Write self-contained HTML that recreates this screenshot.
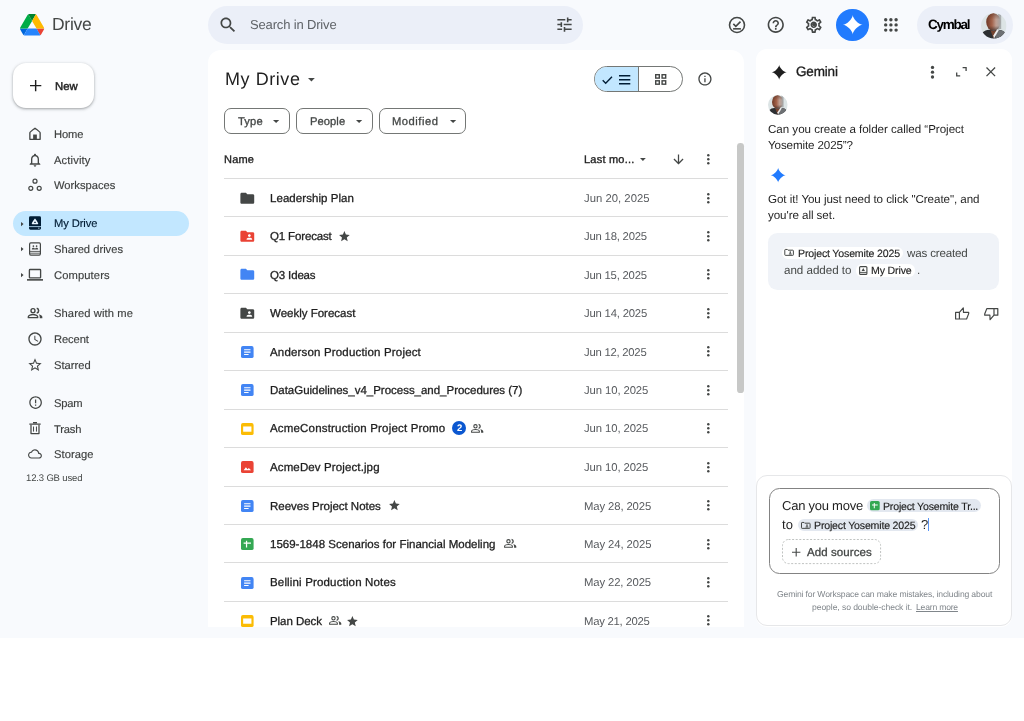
<!DOCTYPE html>
<html lang="en">
<head>
<meta charset="utf-8">
<title>My Drive - Google Drive</title>
<style>
*{box-sizing:border-box;margin:0;padding:0}
html,body{width:1024px;height:721px;overflow:hidden;background:#fff}
body{font-family:"Liberation Sans",sans-serif;color:#1f1f1f;position:relative;font-size:11px;text-rendering:geometricPrecision}
#app{position:absolute;left:0;top:0;width:1024px;height:638px;background:#f8fafd;overflow:hidden}
.abs{position:absolute}
.t{position:absolute;white-space:nowrap;will-change:transform}
svg{position:absolute;overflow:visible}
</style>
</head>
<body>
<div id="app">
<!-- sidebar -->
<div id="sidebar">
<svg style="left:20px;top:13.7px" width="24.2" height="21.5" viewBox="0 0 87.3 78"><path d="m6.6 66.85 3.85 6.65c.8 1.4 1.95 2.5 3.3 3.3l13.75-23.8h-27.5c0 1.55.4 3.1 1.2 4.5z" fill="#0066da"/><path d="m43.65 25-13.75-23.8c-1.35.8-2.5 1.9-3.3 3.3l-25.4 44a9.06 9.06 0 0 0 -1.2 4.5h27.5z" fill="#00ac47"/><path d="m73.55 76.800c1.350-.8 2.500-1.900 3.300-3.300l1.600-2.750 7.650-13.250c.8-1.400 1.200-2.950 1.200-4.500h-27.502l5.852 11.500z" fill="#ea4335"/><path d="m43.650 25 13.750-23.800c-1.350-.8-2.900-1.200-4.500-1.200h-18.500c-1.600 0-3.150.45-4.500 1.200z" fill="#00832d"/><path d="m59.800 53h-32.300l-13.750 23.800c1.350.8 2.900 1.200 4.500 1.200h50.800c1.600 0 3.150-.45 4.500-1.200z" fill="#2684fc"/><path d="m73.400 26.500-12.700-22c-.8-1.400-1.950-2.500-3.300-3.300l-13.750 23.800 16.150 28h27.450c0-1.550-.4-3.100-1.200-4.500z" fill="#ffba00"/></svg>
<div class="t" style="left:51.5px;top:13.1px;font-size:17.5px;line-height:22px;color:#444746;letter-spacing:-0.27px;">Drive</div>
<div class="abs" style="left:12.5px;top:63px;width:81.5px;height:45px;border-radius:13px;background:#fff;box-shadow:0 1px 2px rgba(60,64,67,.3),0 1px 3px 1px rgba(60,64,67,.15)"></div>
<svg style="left:29.6px;top:80.2px" width="11.3" height="11.3" viewBox="0 0 12 12"><path d="M6 0v12M0 6h12" stroke="#1f1f1f" stroke-width="1.500" fill="none"/></svg>
<div class="t" style="left:54.8px;top:78.8px;font-size:11.3px;line-height:16px;color:#1f1f1f;letter-spacing:0.06px;-webkit-text-stroke:0.45px #1f1f1f;">New</div>
<div class="abs" style="left:12.9px;top:211px;width:176.1px;height:25.2px;border-radius:12.6px;background:#c2e7ff"></div>
<div class="t" style="left:54.3px;top:126.7px;font-size:11.2px;line-height:16px;color:#3f4140;letter-spacing:-0.14px;-webkit-text-stroke:0.15px #3f4140;">Home</div>
<div class="t" style="left:54.3px;top:152.7px;font-size:11.2px;line-height:16px;color:#3f4140;letter-spacing:0.13px;-webkit-text-stroke:0.15px #3f4140;">Activity</div>
<div class="t" style="left:54.3px;top:178px;font-size:11.2px;line-height:16px;color:#3f4140;letter-spacing:0.01px;-webkit-text-stroke:0.15px #3f4140;">Workspaces</div>
<div class="t" style="left:54.3px;top:216.3px;font-size:11.2px;line-height:16px;color:#001d35;letter-spacing:-0.11px;-webkit-text-stroke:0.15px #001d35;">My Drive</div>
<div class="t" style="left:54.3px;top:242px;font-size:11.2px;line-height:16px;color:#3f4140;letter-spacing:0px;-webkit-text-stroke:0.15px #3f4140;">Shared drives</div>
<div class="t" style="left:54.3px;top:267.7px;font-size:11.2px;line-height:16px;color:#3f4140;letter-spacing:0.11px;-webkit-text-stroke:0.15px #3f4140;">Computers</div>
<div class="t" style="left:54.3px;top:306.1px;font-size:11.2px;line-height:16px;color:#3f4140;letter-spacing:0.09px;-webkit-text-stroke:0.15px #3f4140;">Shared with me</div>
<div class="t" style="left:54.3px;top:331.8px;font-size:11.2px;line-height:16px;color:#3f4140;letter-spacing:-0.11px;-webkit-text-stroke:0.15px #3f4140;">Recent</div>
<div class="t" style="left:54.3px;top:357.7px;font-size:11.2px;line-height:16px;color:#3f4140;letter-spacing:0px;-webkit-text-stroke:0.15px #3f4140;">Starred</div>
<div class="t" style="left:54.3px;top:395.9px;font-size:11.2px;line-height:16px;color:#3f4140;letter-spacing:-0.23px;-webkit-text-stroke:0.15px #3f4140;">Spam</div>
<div class="t" style="left:54.3px;top:421.7px;font-size:11.2px;line-height:16px;color:#3f4140;letter-spacing:-0.18px;-webkit-text-stroke:0.15px #3f4140;">Trash</div>
<div class="t" style="left:54.3px;top:447.1px;font-size:11.2px;line-height:16px;color:#3f4140;letter-spacing:0.04px;-webkit-text-stroke:0.15px #3f4140;">Storage</div>
<div class="t" style="left:25.9px;top:470.8px;font-size:9.5px;line-height:16px;color:#444746;letter-spacing:-0.15px;">12.3 GB used</div>
<svg style="left:20.7px;top:221.5px" width="2.6" height="4.2" viewBox="0 0 2.6 4.2"><path d="M0 0L2.600 2.100L0 4.200z" fill="#444746"/></svg>
<svg style="left:20.7px;top:247.2px" width="2.6" height="4.2" viewBox="0 0 2.6 4.2"><path d="M0 0L2.600 2.100L0 4.200z" fill="#444746"/></svg>
<svg style="left:20.7px;top:272.9px" width="2.6" height="4.2" viewBox="0 0 2.6 4.2"><path d="M0 0L2.600 2.100L0 4.200z" fill="#444746"/></svg>
<svg style="left:27.2px;top:125.9px" width="16" height="16" viewBox="0 0 24 24"><path d="M12 3.400C12 3.400 4.300 8.800 4.300 10V20H19.700V10C19.700 8.800 12 3.400 12 3.400Z" fill="none" stroke="#444746" stroke-width="2" stroke-linejoin="round"/><rect x="9.200" y="12.800" width="5.600" height="7" fill="#444746"/></svg>
<svg style="left:27.2px;top:151.6px" width="16" height="16" viewBox="0 0 24 24"><path fill="#444746" d="M12 22c1.1 0 2-.9 2-2h-4c0 1.1.9 2 2 2zm6-6v-5c0-3.070-1.630-5.640-4.500-6.320V4c0-.830-.670-1.500-1.500-1.500s-1.500.670-1.500 1.500v.680C7.640 5.360 6 7.920 6 11v5l-2 2v1h16v-1l-2-2zm-2 1H8v-6c0-2.480 1.510-4.500 4-4.500s4 2.020 4 4.500v6z"/></svg>
<svg style="left:27.2px;top:177.2px" width="16" height="16" viewBox="0 0 24 24"><g fill="none" stroke="#444746" stroke-width="1.800"><circle cx="12" cy="6.300" r="3"/><circle cx="5.700" cy="17" r="3"/><circle cx="18.300" cy="17" r="3"/></g></svg>
<svg style="left:27.2px;top:215.3px" width="16" height="16" viewBox="0 0 24 24"><path d="M5.200 1.900h13.600a2.200 2.200 0 0 1 2.200 2.200v15.800a2.200 2.200 0 0 1-2.200 2.200H5.200a2.200 2.200 0 0 1-2.200-2.200V4.100a2.200 2.200 0 0 1 2.200-2.200z" fill="#001d35"/><path d="M3 17.400h18" stroke="#c2e7ff" stroke-width="1.200"/><circle cx="17.800" cy="19.800" r=".9" fill="#c2e7ff"/><path d="M12 5.200c.6 0 4.900 6.600 4.900 7.600c0 .6-.5 1-1 1H8.100c-.5 0-1-.4-1-1C7.100 11.800 11.400 5.200 12 5.200z" fill="#e6f4ff"/><path d="M12 9.300l1.500 2.700h-3z" fill="#001d35"/></svg>
<svg style="left:27.2px;top:241.2px" width="16" height="16" viewBox="0 0 24 24"><rect x="3.900" y="2.900" width="16.200" height="18.200" rx="1.800" fill="none" stroke="#444746" stroke-width="1.800"/><path d="M4 15.600h16M4 18.300h16" stroke="#444746" stroke-width="1.300"/><circle cx="9.600" cy="7.800" r="1.250" fill="#444746"/><circle cx="14.400" cy="7.800" r="1.250" fill="#444746"/><path d="M7.200 12.600c0-1.700 1.200-2.400 2.400-2.400s2.400.7 2.400 2.400zM12 12.600c0-1.700 1.200-2.400 2.400-2.400s2.400.7 2.400 2.400z" fill="#444746"/></svg>
<svg style="left:27.2px;top:266.6px" width="16" height="16" viewBox="0 0 24 24"><rect x="3.600" y="3.800" width="16.800" height="12.400" rx="1" fill="none" stroke="#444746" stroke-width="2"/><path d="M0 19.300h24" stroke="#444746" stroke-width="2.400"/></svg>
<svg style="left:27.2px;top:304.9px" width="16" height="16" viewBox="0 0 24 24"><g fill="none" stroke="#444746" stroke-width="2.100"><circle cx="9" cy="8.500" r="3"/><path d="M2 19v-1.200c0-2.300 4.600-3.500 7-3.500s7 1.200 7 3.500V19z" stroke-linejoin="round"/></g><path d="M14.600 4.900a3.700 3.700 0 0 1 0 7.200" fill="none" stroke="#444746" stroke-width="2.300"/><path d="M17.600 13.800c2.600.6 5.400 1.800 5.400 4V20h-3.900v-2.200c0-1.600-.6-2.900-1.500-4z" fill="#444746"/></svg>
<svg style="left:27.2px;top:330.9px" width="16" height="16" viewBox="0 0 24 24"><path fill="#444746" d="M11.99 2C6.47 2 2 6.48 2 12s4.47 10 9.99 10C17.52 22 22 17.52 22 12S17.52 2 11.99 2zM12 20c-4.42 0-8-3.58-8-8s3.58-8 8-8 8 3.58 8 8-3.58 8-8 8zm.5-13H11v6l5.25 3.15.75-1.23-4.5-2.67z"/></svg>
<svg style="left:27.2px;top:356.7px" width="16" height="16" viewBox="0 0 24 24"><path fill="#444746" d="M22 9.24l-7.19-.62L12 2 9.19 8.63 2 9.24l5.46 4.73L5.82 21 12 17.27 18.18 21l-1.63-7.03L22 9.24zM12 15.4l-3.76 2.27 1-4.28-3.32-2.88 4.38-.38L12 6.1l1.71 4.04 4.38.38-3.32 2.88 1 4.28L12 15.4z"/></svg>
<svg style="left:27.6px;top:395.4px" width="15.2" height="15.2" viewBox="0 0 24 24"><path fill="#444746" d="M11 15h2v2h-2zm0-8h2v6h-2zm.99-5C6.47 2 2 6.48 2 12s4.47 10 9.99 10C17.52 22 22 17.520 22 12S17.520 2 11.990 2zM12 20c-4.420 0-8-3.580-8-8s3.580-8 8-8 8 3.580 8 8-3.580 8-8 8z"/></svg>
<svg style="left:27.2px;top:420.4px" width="16" height="16" viewBox="0 0 24 24"><path d="M6 7.200V20.300H18V7.200" fill="none" stroke="#444746" stroke-width="1.900" stroke-linejoin="round"/><path d="M3.500 6.200h17M9 3.800h6" stroke="#444746" stroke-width="1.900"/><path d="M9.800 9.800v7.600M14.200 9.800v7.600" stroke="#444746" stroke-width="1.500"/></svg>
<svg style="left:28.35px;top:447.3px" width="13.9" height="13.9" viewBox="0 0 24 24"><path fill="#444746" d="M12 6c2.62 0 4.88 1.86 5.39 4.43l.3 1.5 1.53.11c1.560.1 2.780 1.410 2.780 2.960 0 1.650-1.350 3-3 3H6c-2.210 0-4-1.790-4-4 0-2.050 1.530-3.760 3.560-3.970l1.070-.11.5-.95C8.080 7.140 9.940 6 12 6m0-2C9.110 4 6.600 5.640 5.350 8.040 2.340 8.360 0 10.910 0 14c0 3.310 2.690 6 6 6h13c2.760 0 5-2.240 5-5 0-2.640-2.050-4.780-4.650-4.960C18.670 6.590 15.640 4 12 4z"/></svg>
</div>
<!-- topbar -->
<div id="topbar">
<div class="abs" style="left:208.2px;top:5.5px;width:375px;height:38.6px;border-radius:19.300px;background:#ebeff8"></div>
<svg style="left:218px;top:14.6px" width="20" height="20" viewBox="0 0 24 24"><path fill="#444746" d="M15.5 14h-.79l-.28-.27C15.41 12.59 16 11.11 16 9.5 16 5.91 13.09 3 9.5 3S3 5.91 3 9.5 5.91 16 9.5 16c1.61 0 3.09-.59 4.23-1.57l.27.28v.79l5 4.99L20.49 19l-4.99-5zm-6 0C7.01 14 5 11.99 5 9.5S7.01 5 9.5 5 14 7.01 14 9.5 11.99 14 9.5 14z"/></svg>
<div class="t" style="left:250.4px;top:15.8px;font-size:13px;line-height:18px;color:#5f6368;letter-spacing:-0.16px;">Search in Drive</div>
<svg style="left:554.6px;top:15.2px" width="19" height="19" viewBox="0 0 24 24"><path fill="#444746" d="M3 17v2h6v-2H3zM3 5v2h10V5H3zm10 16v-2h8v-2h-8v-2h-2v6h2zM7 9v2H3v2h4v2h2V9H7zm14 4v-2H11v2h10zm-6-4h2V7h4V5h-4V3h-2v6z"/></svg>
<svg style="left:727px;top:14.6px" width="20" height="20" viewBox="0 0 24 24"><circle cx="12" cy="12" r="9" fill="none" stroke="#444746" stroke-width="1.900"/><path d="M7.600 10.600l3 3 5.600-5.600" fill="none" stroke="#444746" stroke-width="1.900"/><path d="M7.300 16.600h9.400" stroke="#444746" stroke-width="1.900"/></svg>
<svg style="left:766.05px;top:14.95px" width="19.5" height="19.5" viewBox="0 0 24 24"><path fill="#444746" d="M11 18h2v-2h-2v2zm1-16C6.48 2 2 6.48 2 12s4.48 10 10 10 10-4.48 10-10S17.52 2 12 2zm0 18c-4.41 0-8-3.59-8-8s3.59-8 8-8 8 3.59 8 8-3.59 8-8 8zm0-14c-2.21 0-4 1.79-4 4h2c0-1.1.9-2 2-2s2 .9 2 2c0 2-3 1.75-3 5h2c0-2.25 3-2.5 3-5 0-2.21-1.79-4-4-4z"/></svg>
<svg style="left:804.25px;top:14.95px" width="19.5" height="19.5" viewBox="0 0 24 24"><path fill="#444746" d="M19.43 12.98c.04-.32.07-.64.07-.98 0-.34-.03-.66-.07-.98l2.11-1.65c.19-.15.24-.42.12-.64l-2-3.46c-.09-.16-.26-.25-.44-.25-.06 0-.12.01-.17.03l-2.49 1c-.52-.4-1.08-.73-1.69-.98l-.38-2.65C14.46 2.18 14.25 2 14 2h-4c-.25 0-.46.18-.49.42l-.38 2.65c-.61.25-1.17.59-1.69.98l-2.49-1c-.06-.02-.12-.03-.18-.03-.17 0-.34.09-.43.25l-2 3.46c-.13.22-.07.49.12.64l2.11 1.65c-.04.32-.07.65-.07.98 0 .33.03.66.07.98l-2.11 1.65c-.19.15-.24.42-.12.64l2 3.46c.09.16.26.25.44.25.06 0 .12-.01.17-.03l2.49-1c.52.4 1.08.73 1.69.98l.38 2.65c.03.24.24.42.49.42h4c.25 0 .46-.18.49-.42l.38-2.65c.61-.25 1.17-.59 1.69-.98l2.49 1c.06.02.12.03.18.03.17 0 .34-.09.43-.25l2-3.46c.12-.22.07-.49-.12-.64l-2.11-1.65zm-1.98-1.71c.04.31.05.52.05.73 0 .21-.02.43-.05.73l-.14 1.13.89.7 1.08.84-.7 1.21-1.27-.51-1.04-.42-.9.68c-.43.32-.84.56-1.25.73l-1.06.43-.16 1.13-.2 1.35h-1.4l-.19-1.35-.16-1.13-1.06-.43c-.43-.18-.83-.41-1.23-.71l-.91-.7-1.06.43-1.27.51-.7-1.21 1.08-.84.89-.7-.14-1.13c-.03-.31-.05-.54-.05-.74s.02-.43.05-.73l.14-1.13-.89-.7-1.08-.84.7-1.21 1.27.51 1.04.42.9-.68c.43-.32.84-.56 1.25-.73l1.06-.43.16-1.13.2-1.35h1.39l.19 1.35.16 1.13 1.06.43c.43.18.83.41 1.23.71l.91.7 1.06-.43 1.27-.51.7 1.21-1.07.85-.89.7.14 1.13zM12 8c-2.21 0-4 1.79-4 4s1.790 4 4 4 4-1.790 4-4-1.790-4-4-4zm0 6c-1.100 0-2-.9-2-2s.9-2 2-2 2 .9 2 2-.9 2-2 2z"/></svg>
<div class="abs" style="left:812.2px;top:22.9px;width:3.6px;height:3.6px;border-radius:50%;background:#444746"></div>
<div class="abs" style="left:836.3px;top:8.5px;width:32.5px;height:32.5px;border-radius:50%;background:#217bfe"></div>
<svg style="left:841.8px;top:14px" width="21.5" height="21.5" viewBox="0 0 24 24"><path fill="#fff" d="M12 1C12 5.100 18.900 12 23 12C18.900 12 12 18.900 12 23C12 18.900 5.100 12 1 12C5.100 12 12 5.100 12 1Z"/></svg>
<svg style="left:884.1px;top:17.8px" width="13.8" height="13.8" viewBox="0 0 13.8 13.8"><g fill="#444746"><circle cx="1.7" cy="1.7" r="1.700"/><circle cx="1.7" cy="6.9" r="1.700"/><circle cx="1.7" cy="12.1" r="1.700"/><circle cx="6.9" cy="1.7" r="1.700"/><circle cx="6.9" cy="6.9" r="1.700"/><circle cx="6.9" cy="12.1" r="1.700"/><circle cx="12.1" cy="1.7" r="1.700"/><circle cx="12.1" cy="6.9" r="1.700"/><circle cx="12.1" cy="12.1" r="1.700"/></g></svg>
<div class="abs" style="left:916.6px;top:5.6px;width:96.4px;height:38.6px;border-radius:19.300px;background:#ebeff8"></div>
<div class="t" style="left:928.2px;top:16.1px;font-size:13.5px;line-height:18px;color:#000;font-weight:bold;letter-spacing:-1.26px;">Cymbal</div>
<svg style="left:980.7px;top:12.5px" width="25.5" height="25.5" viewBox="0 0 25.500 25.500"><defs><clipPath id="ca"><circle cx="12.750" cy="12.750" r="12.750"/></clipPath><linearGradient id="ha" x1="0" x2="1"><stop offset="0" stop-color="#6e3926"/><stop offset=".4" stop-color="#a2624a"/><stop offset=".68" stop-color="#bf9f92"/><stop offset="1" stop-color="#a4a3a2"/></linearGradient><linearGradient id="sa" x1="0" x2="0" y1="0" y2="1"><stop offset="0" stop-color="#5a2f20" stop-opacity=".55"/><stop offset=".35" stop-color="#5a2f20" stop-opacity="0"/><stop offset=".72" stop-color="#3b2c28" stop-opacity="0"/><stop offset="1" stop-color="#3b2c28" stop-opacity=".75"/></linearGradient></defs><g clip-path="url(#ca)"><rect width="25.500" height="25.500" fill="#dce4e5"/><rect x="17.200" y="0" width="3" height="16" fill="#a9adae"/><ellipse cx="12.400" cy="9" rx="7.200" ry="8.800" fill="url(#ha)"/><ellipse cx="12.400" cy="9" rx="7.200" ry="8.800" fill="url(#sa)"/><path d="M1 20C5 16.500 8 16 12.500 17.800C17 16 21 16.500 24.500 20V26H1z" fill="#2d2f32"/><path d="M16 17.200C19 16.400 22 17.500 24.500 20V26H14z" fill="#6d7073"/><path d="M9.300 16.800L12.500 25.500L15.700 16.800C13.500 18.600 11.500 18.600 9.300 16.800z" fill="#74432f"/><path d="M13 25.500L17.800 17L16 16.400L12.300 22.500z" fill="#ececec"/></g></svg>
</div>
<!-- main -->
<div id="main">
<div class="abs" style="left:208.4px;top:50.2px;width:535.2px;height:576.8px;border-radius:13px 13px 0 0;background:#fff"></div>
<div class="t" style="left:224.6px;top:67px;font-size:18px;line-height:24px;color:#1f1f1f;letter-spacing:0.56px;">My Drive</div>
<svg style="left:308.4px;top:77.5px" width="6.8" height="3.4" viewBox="0 0 6.800 3.400"><path d="M0 0h6.800L3.400 3.400z" fill="#444746"/></svg>
<div class="abs" style="left:224.2px;top:108.4px;width:65.6px;height:25.4px;border:1px solid #747775;border-radius:7px;background:#fff"></div>
<div class="t" style="left:237.7px;top:113.8px;font-size:11.2px;line-height:16px;color:#444746;letter-spacing:0.13px;-webkit-text-stroke:0.3px #444746;">Type</div>
<svg style="left:273.3px;top:119.7px" width="6.2" height="3.1" viewBox="0 0 6.200 3.100"><path d="M0 0h6.200L3.100 3.100z" fill="#444746"/></svg>
<div class="abs" style="left:296.1px;top:108.4px;width:76.8px;height:25.4px;border:1px solid #747775;border-radius:7px;background:#fff"></div>
<div class="t" style="left:309.8px;top:113.8px;font-size:11.2px;line-height:16px;color:#444746;letter-spacing:0.06px;-webkit-text-stroke:0.3px #444746;">People</div>
<svg style="left:356px;top:119.7px" width="6.2" height="3.1" viewBox="0 0 6.200 3.100"><path d="M0 0h6.200L3.100 3.100z" fill="#444746"/></svg>
<div class="abs" style="left:379.3px;top:108.4px;width:87.2px;height:25.4px;border:1px solid #747775;border-radius:7px;background:#fff"></div>
<div class="t" style="left:392.3px;top:113.8px;font-size:11.2px;line-height:16px;color:#444746;letter-spacing:0.51px;-webkit-text-stroke:0.3px #444746;">Modified</div>
<svg style="left:449.9px;top:119.7px" width="6.2" height="3.1" viewBox="0 0 6.200 3.100"><path d="M0 0h6.200L3.100 3.100z" fill="#444746"/></svg>
<div class="abs" style="left:593.500px;top:66.200px;width:89.300px;height:25.400px;border:1px solid #747775;border-radius:12.700px;background:#fff;overflow:hidden"><div class="abs" style="left:0;top:0;width:44.300px;height:24px;background:#c2e7ff;border-right:1px solid #747775"></div></div>
<svg style="left:602.1px;top:75.5px" width="10.7" height="7.8" viewBox="0 0 10.700 7.800"><path d="M0.700 4.200l3 3L10 0.800" fill="none" stroke="#001d35" stroke-width="1.400"/></svg>
<svg style="left:619.2px;top:74.5px" width="11.3" height="9.6" viewBox="0 0 11.300 9.600"><path d="M0 .8h11.300M0 4.800h11.300M0 8.800h11.300" stroke="#001d35" stroke-width="1.400"/></svg>
<svg style="left:654.7px;top:73.9px" width="11.4" height="10.9" viewBox="0 0 11.400 10.900"><g fill="none" stroke="#444746" stroke-width="1.400"><rect x=".7" y=".7" width="3.600" height="3.400"/><rect x="7.100" y=".7" width="3.600" height="3.400"/><rect x=".7" y="6.800" width="3.600" height="3.400"/><rect x="7.100" y="6.800" width="3.600" height="3.400"/></g></svg>
<svg style="left:697.15px;top:71.05px" width="15.9" height="15.9" viewBox="0 0 24 24"><path fill="#444746" d="M11 7h2v2h-2zm0 4h2v6h-2zm1-9C6.48 2 2 6.48 2 12s4.48 10 10 10 10-4.48 10-10S17.52 2 12 2zm0 18c-4.41 0-8-3.59-8-8s3.59-8 8-8 8 3.59 8 8-3.59 8-8 8z"/></svg>
<div class="t" style="left:224.3px;top:152.1px;font-size:11px;line-height:16px;color:#1f1f1f;letter-spacing:0.21px;-webkit-text-stroke:0.35px #1f1f1f;">Name</div>
<div class="t" style="left:583.6px;top:152.1px;font-size:11px;line-height:16px;color:#1f1f1f;letter-spacing:0.22px;-webkit-text-stroke:0.35px #1f1f1f;">Last mo...</div>
<svg style="left:639.7px;top:158.4px" width="5.8" height="2.9" viewBox="0 0 5.800 2.900"><path d="M0 0h5.800L2.900 2.900z" fill="#444746"/></svg>
<svg style="left:670.5px;top:152.4px" width="15" height="15" viewBox="0 0 24 24"><path fill="#444746" d="M20 12l-1.41-1.41L13 16.17V4h-2v12.170l-5.580-5.590L4 12l8 8 8-8z"/></svg>
<svg style="left:707.1px;top:154.3px" width="2.6" height="10.6" viewBox="0 0 2.600 10.600"><g fill="#444746"><circle cx="1.300" cy="1.300" r="1.250"/><circle cx="1.300" cy="5.300" r="1.250"/><circle cx="1.300" cy="9.300" r="1.250"/></g></svg>
<div class="abs" style="left:224px;top:177.9px;width:503.6px;height:1px;background:#dcdcdc"></div>
<div class="t" style="left:269.6px;top:190.62px;font-size:11.5px;line-height:16px;color:#1f1f1f;letter-spacing:0.06px;-webkit-text-stroke:0.3px #1f1f1f;">Leadership Plan</div>
<div class="t" style="left:583.6px;top:190.62px;font-size:11.3px;line-height:16px;color:#585b5f;letter-spacing:0.02px;">Jun 20, 2025</div>
<svg style="left:707.1px;top:192.52px" width="2.6" height="10.6" viewBox="0 0 2.600 10.600"><g fill="#444746"><circle cx="1.300" cy="1.300" r="1.250"/><circle cx="1.300" cy="5.300" r="1.250"/><circle cx="1.300" cy="9.300" r="1.250"/></g></svg>
<svg style="left:238.6px;top:189.52px" width="16.6" height="16.6" viewBox="0 0 24 24"><path fill="#444746" d="M10 4H4c-1.1 0-1.99.9-1.99 2L2 18c0 1.1.9 2 2 2h16c1.1 0 2-.9 2-2V8c0-1.1-.9-2-2-2h-8l-2-2z"/></svg>
<div class="abs" style="left:224px;top:216.35px;width:503.6px;height:1px;background:#dcdcdc"></div>
<div class="t" style="left:269.6px;top:229.08px;font-size:11.5px;line-height:16px;color:#1f1f1f;letter-spacing:-0.15px;-webkit-text-stroke:0.3px #1f1f1f;">Q1 Forecast</div>
<div class="t" style="left:583.6px;top:229.08px;font-size:11.3px;line-height:16px;color:#585b5f;letter-spacing:-0.2px;">Jun 18, 2025</div>
<svg style="left:707.1px;top:230.97px" width="2.6" height="10.6" viewBox="0 0 2.600 10.600"><g fill="#444746"><circle cx="1.300" cy="1.300" r="1.250"/><circle cx="1.300" cy="5.300" r="1.250"/><circle cx="1.300" cy="9.300" r="1.250"/></g></svg>
<svg style="left:238.6px;top:227.97px" width="16.6" height="16.6" viewBox="0 0 24 24"><path fill="#ea4335" d="M20 6h-8l-2-2H4c-1.1 0-1.99.9-1.99 2L2 18c0 1.1.9 2 2 2h16c1.1 0 2-.9 2-2V8c0-1.1-.9-2-2-2zm-5 3c1.1 0 2 .9 2 2s-.9 2-2 2-2-.9-2-2 .9-2 2-2zm4 8h-8v-1c0-1.33 2.67-2 4-2s4 .67 4 2v1z"/></svg>
<svg style="left:338.1px;top:230.18px" width="12.8" height="12.8" viewBox="0 0 24 24"><path fill="#444746" d="M12 17.27L18.18 21l-1.64-7.03L22 9.24l-7.19-.61L12 2 9.19 8.63 2 9.24l5.46 4.73L5.82 21z"/></svg>
<div class="abs" style="left:224px;top:254.8px;width:503.6px;height:1px;background:#dcdcdc"></div>
<div class="t" style="left:269.6px;top:267.53px;font-size:11.5px;line-height:16px;color:#1f1f1f;letter-spacing:-0.15px;-webkit-text-stroke:0.3px #1f1f1f;">Q3 Ideas</div>
<div class="t" style="left:583.6px;top:267.53px;font-size:11.3px;line-height:16px;color:#585b5f;letter-spacing:-0.21px;">Jun 15, 2025</div>
<svg style="left:707.1px;top:269.43px" width="2.6" height="10.6" viewBox="0 0 2.600 10.600"><g fill="#444746"><circle cx="1.300" cy="1.300" r="1.250"/><circle cx="1.300" cy="5.300" r="1.250"/><circle cx="1.300" cy="9.300" r="1.250"/></g></svg>
<svg style="left:238.6px;top:266.43px" width="16.6" height="16.6" viewBox="0 0 24 24"><path fill="#4285f4" d="M10 4H4c-1.1 0-1.99.9-1.99 2L2 18c0 1.1.9 2 2 2h16c1.1 0 2-.9 2-2V8c0-1.1-.9-2-2-2h-8l-2-2z"/></svg>
<div class="abs" style="left:224px;top:293.25px;width:503.6px;height:1px;background:#dcdcdc"></div>
<div class="t" style="left:269.6px;top:305.98px;font-size:11.5px;line-height:16px;color:#1f1f1f;letter-spacing:0px;-webkit-text-stroke:0.3px #1f1f1f;">Weekly Forecast</div>
<div class="t" style="left:583.6px;top:305.98px;font-size:11.3px;line-height:16px;color:#585b5f;letter-spacing:-0.19px;">Jun 14, 2025</div>
<svg style="left:707.1px;top:307.88px" width="2.6" height="10.6" viewBox="0 0 2.600 10.600"><g fill="#444746"><circle cx="1.300" cy="1.300" r="1.250"/><circle cx="1.300" cy="5.300" r="1.250"/><circle cx="1.300" cy="9.300" r="1.250"/></g></svg>
<svg style="left:238.6px;top:304.88px" width="16.6" height="16.6" viewBox="0 0 24 24"><path fill="#444746" d="M20 6h-8l-2-2H4c-1.1 0-1.99.9-1.99 2L2 18c0 1.1.9 2 2 2h16c1.1 0 2-.9 2-2V8c0-1.1-.9-2-2-2zm-5 3c1.1 0 2 .9 2 2s-.9 2-2 2-2-.9-2-2 .9-2 2-2zm4 8h-8v-1c0-1.33 2.67-2 4-2s4 .67 4 2v1z"/></svg>
<div class="abs" style="left:224px;top:331.7px;width:503.6px;height:1px;background:#dcdcdc"></div>
<div class="t" style="left:269.6px;top:344.83px;font-size:11.5px;line-height:16px;color:#1f1f1f;letter-spacing:0.17px;-webkit-text-stroke:0.3px #1f1f1f;">Anderson Production Project</div>
<div class="t" style="left:583.6px;top:344.83px;font-size:11.3px;line-height:16px;color:#585b5f;letter-spacing:-0.24px;">Jun 12, 2025</div>
<svg style="left:707.1px;top:346.33px" width="2.6" height="10.6" viewBox="0 0 2.600 10.600"><g fill="#444746"><circle cx="1.300" cy="1.300" r="1.250"/><circle cx="1.300" cy="5.300" r="1.250"/><circle cx="1.300" cy="9.300" r="1.250"/></g></svg>
<svg style="left:240.6px;top:345.93px" width="12.6" height="12.2" viewBox="0 0 13.400 12.800"><rect width="13.400" height="12.800" rx="2" fill="#4285f4"/><path d="M3.300 3.900h6.800M3.300 6.400h6.800M3.300 8.900h4.800" stroke="#fff" stroke-width="1.200"/></svg>
<div class="abs" style="left:224px;top:370.15px;width:503.6px;height:1px;background:#dcdcdc"></div>
<div class="t" style="left:269.6px;top:382.88px;font-size:11.5px;line-height:16px;color:#1f1f1f;letter-spacing:-0.02px;-webkit-text-stroke:0.3px #1f1f1f;">DataGuidelines_v4_Process_and_Procedures (7)</div>
<div class="t" style="left:583.6px;top:382.88px;font-size:11.3px;line-height:16px;color:#585b5f;letter-spacing:-0.09px;">Jun 10, 2025</div>
<svg style="left:707.1px;top:384.77px" width="2.6" height="10.6" viewBox="0 0 2.600 10.600"><g fill="#444746"><circle cx="1.300" cy="1.300" r="1.250"/><circle cx="1.300" cy="5.300" r="1.250"/><circle cx="1.300" cy="9.300" r="1.250"/></g></svg>
<svg style="left:240.6px;top:384.37px" width="12.6" height="12.2" viewBox="0 0 13.400 12.800"><rect width="13.400" height="12.800" rx="2" fill="#4285f4"/><path d="M3.300 3.900h6.800M3.300 6.400h6.800M3.300 8.900h4.800" stroke="#fff" stroke-width="1.200"/></svg>
<div class="abs" style="left:224px;top:408.6px;width:503.6px;height:1px;background:#dcdcdc"></div>
<div class="t" style="left:269.6px;top:421.33px;font-size:11.5px;line-height:16px;color:#1f1f1f;letter-spacing:0.18px;-webkit-text-stroke:0.3px #1f1f1f;">AcmeConstruction Project Promo</div>
<div class="t" style="left:583.6px;top:421.33px;font-size:11.3px;line-height:16px;color:#585b5f;letter-spacing:-0.09px;">Jun 10, 2025</div>
<svg style="left:707.1px;top:423.23px" width="2.6" height="10.6" viewBox="0 0 2.600 10.600"><g fill="#444746"><circle cx="1.300" cy="1.300" r="1.250"/><circle cx="1.300" cy="5.300" r="1.250"/><circle cx="1.300" cy="9.300" r="1.250"/></g></svg>
<svg style="left:240.6px;top:422.82px" width="12.6" height="12.2" viewBox="0 0 13.400 12.800"><rect width="13.400" height="12.800" rx="2" fill="#fbbc04"/><rect x="2.300" y="3.600" width="8.800" height="5.600" fill="#fff"/></svg>
<div class="abs" style="left:452.1px;top:421.23px;width:14.2px;height:14.2px;border-radius:50%;background:#0b57d0"></div>
<div class="t" style="left:456.5px;top:423.23px;font-size:9.5px;line-height:12px;color:#fff;font-weight:bold;">2</div>
<svg style="left:471.3px;top:423.13px" width="12.3" height="10.8" viewBox="1 4 22 16.500"><g fill="none" stroke="#444746" stroke-width="1.900"><circle cx="9" cy="8.500" r="3"/><path d="M2 19v-1.200c0-2.300 4.600-3.500 7-3.500s7 1.200 7 3.500V19z" stroke-linejoin="round"/></g><path d="M14.600 4.900a3.700 3.700 0 0 1 0 7.200" fill="none" stroke="#444746" stroke-width="2.300"/><path d="M17.600 13.800c2.600.6 5.400 1.800 5.400 4V20h-3.900v-2.200c0-1.600-.6-2.900-1.500-4z" fill="#444746"/></svg>
<div class="abs" style="left:224px;top:447.05px;width:503.6px;height:1px;background:#dcdcdc"></div>
<div class="t" style="left:269.6px;top:459.78px;font-size:11.5px;line-height:16px;color:#1f1f1f;letter-spacing:0.12px;-webkit-text-stroke:0.3px #1f1f1f;">AcmeDev Project.jpg</div>
<div class="t" style="left:583.6px;top:459.78px;font-size:11.3px;line-height:16px;color:#585b5f;letter-spacing:-0.09px;">Jun 10, 2025</div>
<svg style="left:707.1px;top:461.68px" width="2.6" height="10.6" viewBox="0 0 2.600 10.600"><g fill="#444746"><circle cx="1.300" cy="1.300" r="1.250"/><circle cx="1.300" cy="5.300" r="1.250"/><circle cx="1.300" cy="9.300" r="1.250"/></g></svg>
<svg style="left:240.6px;top:461.28px" width="12.6" height="12.2" viewBox="0 0 13.400 12.800"><rect width="13.400" height="12.800" rx="2" fill="#ea4335"/><path d="M2.800 9.800l2.400-3.200 1.800 2.200 1.300-1.500 2.400 2.500z" fill="#fff"/></svg>
<div class="abs" style="left:224px;top:485.5px;width:503.6px;height:1px;background:#dcdcdc"></div>
<div class="t" style="left:269.6px;top:498.62px;font-size:11.5px;line-height:16px;color:#1f1f1f;letter-spacing:-0.02px;-webkit-text-stroke:0.3px #1f1f1f;">Reeves Project Notes</div>
<div class="t" style="left:583.6px;top:498.62px;font-size:11.3px;line-height:16px;color:#585b5f;letter-spacing:-0.11px;">May 28, 2025</div>
<svg style="left:707.1px;top:500.12px" width="2.6" height="10.6" viewBox="0 0 2.600 10.600"><g fill="#444746"><circle cx="1.300" cy="1.300" r="1.250"/><circle cx="1.300" cy="5.300" r="1.250"/><circle cx="1.300" cy="9.300" r="1.250"/></g></svg>
<svg style="left:240.6px;top:499.72px" width="12.6" height="12.2" viewBox="0 0 13.400 12.800"><rect width="13.400" height="12.800" rx="2" fill="#4285f4"/><path d="M3.300 3.900h6.800M3.300 6.400h6.800M3.300 8.900h4.800" stroke="#fff" stroke-width="1.200"/></svg>
<svg style="left:387.9px;top:499.33px" width="12.8" height="12.8" viewBox="0 0 24 24"><path fill="#444746" d="M12 17.27L18.18 21l-1.64-7.03L22 9.24l-7.19-.61L12 2 9.19 8.63 2 9.24l5.46 4.73L5.82 21z"/></svg>
<div class="abs" style="left:224px;top:523.95px;width:503.6px;height:1px;background:#dcdcdc"></div>
<div class="t" style="left:269.6px;top:536.68px;font-size:11.5px;line-height:16px;color:#1f1f1f;letter-spacing:0.01px;-webkit-text-stroke:0.3px #1f1f1f;">1569-1848 Scenarios for Financial Modeling</div>
<div class="t" style="left:583.6px;top:536.68px;font-size:11.3px;line-height:16px;color:#585b5f;letter-spacing:-0.09px;">May 24, 2025</div>
<svg style="left:707.1px;top:538.58px" width="2.6" height="10.6" viewBox="0 0 2.600 10.600"><g fill="#444746"><circle cx="1.300" cy="1.300" r="1.250"/><circle cx="1.300" cy="5.300" r="1.250"/><circle cx="1.300" cy="9.300" r="1.250"/></g></svg>
<svg style="left:240.6px;top:538.18px" width="12.6" height="12.2" viewBox="0 0 13.400 12.800"><rect width="13.400" height="12.800" rx="2" fill="#34a853"/><path d="M2.800 5.400h7.800M5.900 2.800v7.200" stroke="#fff" stroke-width="1.300"/></svg>
<svg style="left:503.5px;top:538.48px" width="12.3" height="10.8" viewBox="1 4 22 16.500"><g fill="none" stroke="#444746" stroke-width="1.900"><circle cx="9" cy="8.500" r="3"/><path d="M2 19v-1.200c0-2.300 4.600-3.500 7-3.500s7 1.200 7 3.500V19z" stroke-linejoin="round"/></g><path d="M14.600 4.900a3.700 3.700 0 0 1 0 7.200" fill="none" stroke="#444746" stroke-width="2.300"/><path d="M17.600 13.800c2.600.6 5.400 1.800 5.400 4V20h-3.900v-2.200c0-1.600-.6-2.900-1.500-4z" fill="#444746"/></svg>
<div class="abs" style="left:224px;top:562.4px;width:503.6px;height:1px;background:#dcdcdc"></div>
<div class="t" style="left:269.6px;top:575.12px;font-size:11.5px;line-height:16px;color:#1f1f1f;letter-spacing:0.16px;-webkit-text-stroke:0.3px #1f1f1f;">Bellini Production Notes</div>
<div class="t" style="left:583.6px;top:575.12px;font-size:11.3px;line-height:16px;color:#585b5f;letter-spacing:-0.12px;">May 22, 2025</div>
<svg style="left:707.1px;top:577.03px" width="2.6" height="10.6" viewBox="0 0 2.600 10.600"><g fill="#444746"><circle cx="1.300" cy="1.300" r="1.250"/><circle cx="1.300" cy="5.300" r="1.250"/><circle cx="1.300" cy="9.300" r="1.250"/></g></svg>
<svg style="left:240.6px;top:576.62px" width="12.6" height="12.2" viewBox="0 0 13.400 12.800"><rect width="13.400" height="12.800" rx="2" fill="#4285f4"/><path d="M3.300 3.900h6.800M3.300 6.400h6.800M3.300 8.900h4.800" stroke="#fff" stroke-width="1.200"/></svg>
<div class="abs" style="left:224px;top:600.85px;width:503.6px;height:1px;background:#dcdcdc"></div>
<div class="t" style="left:269.6px;top:613.58px;font-size:11.5px;line-height:16px;color:#1f1f1f;letter-spacing:-0.06px;-webkit-text-stroke:0.3px #1f1f1f;">Plan Deck</div>
<div class="t" style="left:583.6px;top:613.58px;font-size:11.3px;line-height:16px;color:#585b5f;letter-spacing:-0.24px;">May 21, 2025</div>
<svg style="left:707.1px;top:615.48px" width="2.6" height="10.6" viewBox="0 0 2.600 10.600"><g fill="#444746"><circle cx="1.300" cy="1.300" r="1.250"/><circle cx="1.300" cy="5.300" r="1.250"/><circle cx="1.300" cy="9.300" r="1.250"/></g></svg>
<svg style="left:240.6px;top:615.08px" width="12.6" height="12.2" viewBox="0 0 13.400 12.800"><rect width="13.400" height="12.800" rx="2" fill="#fbbc04"/><rect x="2.300" y="3.600" width="8.800" height="5.600" fill="#fff"/></svg>
<svg style="left:329.4px;top:615.38px" width="12.3" height="10.8" viewBox="1 4 22 16.500"><g fill="none" stroke="#444746" stroke-width="1.900"><circle cx="9" cy="8.500" r="3"/><path d="M2 19v-1.200c0-2.300 4.600-3.500 7-3.500s7 1.200 7 3.500V19z" stroke-linejoin="round"/></g><path d="M14.600 4.900a3.700 3.700 0 0 1 0 7.200" fill="none" stroke="#444746" stroke-width="2.300"/><path d="M17.600 13.800c2.600.6 5.400 1.800 5.400 4V20h-3.900v-2.200c0-1.600-.6-2.900-1.500-4z" fill="#444746"/></svg>
<svg style="left:346px;top:614.68px" width="12.8" height="12.8" viewBox="0 0 24 24"><path fill="#444746" d="M12 17.27L18.18 21l-1.64-7.03L22 9.24l-7.19-.61L12 2 9.19 8.63 2 9.24l5.46 4.73L5.82 21z"/></svg>
<div class="abs" style="left:737.1px;top:143.3px;width:6.7px;height:249.9px;border-radius:3.350px;background:#c7c8c7"></div>
<div class="abs" style="left:200px;top:627px;width:550px;height:10.6px;background:#f8fafd"></div>
</div>
<!-- gemini -->
<div id="gemini">
<div class="abs" style="left:756.1px;top:49.3px;width:256.2px;height:577.3px;border-radius:11px;background:#fff"></div>
<svg style="left:770.7px;top:63.8px" width="16.4" height="16.4" viewBox="0 0 24 24"><path fill="#1f1f1f" d="M12 1C12 5.100 18.900 12 23 12C18.900 12 12 18.900 12 23C12 18.900 5.100 12 1 12C5.100 12 12 5.100 12 1Z"/></svg>
<div class="t" style="left:795.5px;top:63px;font-size:13.5px;line-height:18px;color:#1f1f1f;letter-spacing:-0.16px;-webkit-text-stroke:0.35px #1f1f1f;">Gemini</div>
<svg style="left:931px;top:65.5px" width="3" height="12.4" viewBox="0 0 3 12.400"><g fill="#444746"><circle cx="1.500" cy="1.400" r="1.650"/><circle cx="1.500" cy="6.200" r="1.650"/><circle cx="1.500" cy="11" r="1.650"/></g></svg>
<svg style="left:956px;top:67.4px" width="10.8" height="9.6" viewBox="0 0 10.800 9.600"><path d="M6.600 .7h3.500v3.300M.7 5.600v3.300h3.500" fill="none" stroke="#444746" stroke-width="1.300"/></svg>
<svg style="left:985.5px;top:67.3px" width="9.6" height="9.6" viewBox="0 0 9.600 9.600"><path d="M.5 .5l8.600 8.600M9.100 .5L.5 9.100" fill="none" stroke="#444746" stroke-width="1.300"/></svg>
<svg style="left:768.2px;top:94.5px" width="19.7" height="19.7" viewBox="0 0 25.500 25.500"><defs><clipPath id="cb"><circle cx="12.750" cy="12.750" r="12.750"/></clipPath><linearGradient id="hb" x1="0" x2="1"><stop offset="0" stop-color="#6e3926"/><stop offset=".4" stop-color="#a2624a"/><stop offset=".68" stop-color="#bf9f92"/><stop offset="1" stop-color="#a4a3a2"/></linearGradient><linearGradient id="sb" x1="0" x2="0" y1="0" y2="1"><stop offset="0" stop-color="#5a2f20" stop-opacity=".55"/><stop offset=".35" stop-color="#5a2f20" stop-opacity="0"/><stop offset=".72" stop-color="#3b2c28" stop-opacity="0"/><stop offset="1" stop-color="#3b2c28" stop-opacity=".75"/></linearGradient></defs><g clip-path="url(#cb)"><rect width="25.500" height="25.500" fill="#dce4e5"/><rect x="17.200" y="0" width="3" height="16" fill="#a9adae"/><ellipse cx="12.400" cy="9" rx="7.200" ry="8.800" fill="url(#hb)"/><ellipse cx="12.400" cy="9" rx="7.200" ry="8.800" fill="url(#sb)"/><path d="M1 20C5 16.500 8 16 12.500 17.800C17 16 21 16.500 24.500 20V26H1z" fill="#2d2f32"/><path d="M16 17.200C19 16.400 22 17.500 24.500 20V26H14z" fill="#6d7073"/><path d="M9.300 16.800L12.500 25.500L15.700 16.800C13.500 18.600 11.500 18.600 9.300 16.800z" fill="#74432f"/><path d="M13 25.500L17.800 17L16 16.400L12.300 22.500z" fill="#ececec"/></g></svg>
<div class="t" style="left:768.2px;top:121.5px;font-size:11.6px;line-height:16px;color:#1f1f1f;letter-spacing:-0.03px;">Can you create a folder called “Project</div>
<div class="t" style="left:768.2px;top:137.8px;font-size:11.6px;line-height:16px;color:#1f1f1f;letter-spacing:-0.11px;">Yosemite 2025”?</div>
<svg style="left:769.75px;top:166.75px" width="16.3" height="16.3" viewBox="0 0 24 24"><path fill="#217bfe" d="M12 1C12 5.100 18.900 12 23 12C18.900 12 12 18.900 12 23C12 18.900 5.100 12 1 12C5.100 12 12 5.100 12 1Z"/></svg>
<div class="t" style="left:768.2px;top:191.6px;font-size:11.6px;line-height:16px;color:#1f1f1f;letter-spacing:-0.07px;">Got it! You just need to click "Create", and</div>
<div class="t" style="left:768.2px;top:208.1px;font-size:11.6px;line-height:16px;color:#1f1f1f;letter-spacing:-0.06px;">you're all set.</div>
<div class="abs" style="left:768.2px;top:232.6px;width:231.1px;height:57.2px;border-radius:9.500px;background:#f0f3f8"></div>
<div class="abs" style="left:781.7px;top:246.5px;width:121.1px;height:12.5px;border-radius:6px;background:#fff"></div>
<svg style="left:784.2px;top:249.3px" width="10.2" height="6.8" viewBox="0 0 12.800 9.200"><path d="M.6 1.400a.8.8 0 0 1 .8-.8h2.600l1 1h6.400a.8.8 0 0 1 .8.800v5.400a.8.8 0 0 1-.8.800H1.400a.8.8 0 0 1-.8-.8z" fill="none" stroke="#444746" stroke-width="1.350"/><circle cx="8" cy="4.300" r="1.100" fill="#444746"/><path d="M6 7.300c0-1.200 1-1.600 2-1.600s2 .4 2 1.600z" fill="#444746"/></svg>
<div class="t" style="left:797.7px;top:245.7px;font-size:10.6px;line-height:16px;color:#1f1f1f;letter-spacing:-0.17px;-webkit-text-stroke:0.15px #1f1f1f;">Project Yosemite 2025</div>
<div class="t" style="left:906.6px;top:245.7px;font-size:11.6px;line-height:16px;color:#444746;letter-spacing:-0.17px;">was created</div>
<div class="t" style="left:784.2px;top:263.4px;font-size:11.6px;line-height:16px;color:#444746;letter-spacing:-0.02px;">and added to</div>
<div class="abs" style="left:855.8px;top:264.3px;width:59.7px;height:12.4px;border-radius:6px;background:#fff"></div>
<svg style="left:859px;top:266px" width="8.5" height="9" viewBox="0 0 8.500 9"><rect x=".6" y=".6" width="7.300" height="7.800" rx="1" fill="none" stroke="#444746" stroke-width="1.100"/><path d="M.6 6.400h7.300" stroke="#444746" stroke-width=".9"/><path d="M4.250 2l1.700 2.900h-3.400z" fill="#444746"/></svg>
<div class="t" style="left:871.3px;top:263.3px;font-size:10.6px;line-height:16px;color:#1f1f1f;letter-spacing:-0.15px;-webkit-text-stroke:0.15px #1f1f1f;">My Drive</div>
<div class="t" style="left:917.3px;top:263.4px;font-size:11.6px;line-height:16px;color:#444746;">.</div>
<svg style="left:955px;top:307px" width="14.4" height="12.6" viewBox="0 0 14.400 12.600"><path d="M4.400 5.400L8.300 .9L8.500 5.400H13.700V6.600L11.600 12H4.400ZM.6 5.400H4.400V12H.6Z" fill="none" stroke="#444746" stroke-width="1.200" stroke-linejoin="round"/></svg>
<svg style="left:984px;top:308.2px" width="14.4" height="12.6" viewBox="0 0 14.400 12.600"><g transform="rotate(180 7.200 6.300)"><path d="M4.400 5.400L8.300 .9L8.500 5.400H13.700V6.600L11.600 12H4.400ZM.6 5.400H4.400V12H.6Z" fill="none" stroke="#444746" stroke-width="1.200" stroke-linejoin="round"/></g></svg>
<div class="abs" style="left:756.1px;top:474.8px;width:256.3px;height:151.6px;border:1px solid #e6e7e9;border-radius:11px;background:#fff"></div>
<div class="abs" style="left:769.2px;top:488.2px;width:230.8px;height:86.2px;border:1px solid #838383;border-radius:10.500px;background:#fff"></div>
<div class="t" style="left:782.2px;top:496.6px;font-size:13px;line-height:18px;color:#1f1f1f;letter-spacing:-0.24px;">Can you move</div>
<div class="abs" style="left:867.3px;top:499.3px;width:114.2px;height:13.2px;border-radius:6.500px;background:#e3e8f0"></div>
<svg style="left:870px;top:501px" width="9.7" height="9.3" viewBox="0 0 9.700 9.300"><rect width="9.700" height="9.300" rx="1.600" fill="#34a853"/><path d="M2 4h5.700M4.300 2v5.300" stroke="#fff" stroke-width="1"/></svg>
<div class="t" style="left:883.1px;top:498.5px;font-size:10.6px;line-height:16px;color:#1f1f1f;letter-spacing:-0.2px;-webkit-text-stroke:0.15px #1f1f1f;">Project Yosemite Tr...</div>
<div class="t" style="left:782.2px;top:516.3px;font-size:13px;line-height:18px;color:#1f1f1f;letter-spacing:0.18px;">to</div>
<div class="abs" style="left:797.5px;top:519px;width:120.5px;height:12.4px;border-radius:6.500px;background:#e3e8f0"></div>
<svg style="left:800.6px;top:521.6px" width="9.6" height="6.8" viewBox="0 0 12.800 9.200"><path d="M.6 1.400a.8.8 0 0 1 .8-.8h2.600l1 1h6.400a.8.8 0 0 1 .8.800v5.400a.8.8 0 0 1-.8.800H1.400a.8.8 0 0 1-.8-.8z" fill="none" stroke="#444746" stroke-width="1.350"/><circle cx="8" cy="4.300" r="1.100" fill="#444746"/><path d="M6 7.300c0-1.200 1-1.600 2-1.600s2 .4 2 1.600z" fill="#444746"/></svg>
<div class="t" style="left:814px;top:518.1px;font-size:10.6px;line-height:16px;color:#1f1f1f;letter-spacing:-0.19px;-webkit-text-stroke:0.15px #1f1f1f;">Project Yosemite 2025</div>
<div class="t" style="left:920.6px;top:516.3px;font-size:13px;line-height:18px;color:#1f1f1f;">?</div>
<div class="abs" style="left:927.5px;top:518px;width:1.2px;height:13.4px;background:#5a95f5"></div>
<svg style="left:782.2px;top:539.3px" width="99.1" height="25.1" viewBox="0 0 99.100 25.100"><rect x=".5" y=".5" width="98.100" height="24.100" rx="6" fill="none" stroke="#c0c3c1" stroke-width="1" stroke-dasharray="2 1.600"/></svg>
<svg style="left:791.7px;top:547.8px" width="8.4" height="8.4" viewBox="0 0 8.400 8.400"><path d="M4.200 0v8.400M0 4.200h8.400" stroke="#444746" stroke-width="1.100"/></svg>
<div class="t" style="left:806.7px;top:544.8px;font-size:11.5px;line-height:16px;color:#444746;letter-spacing:0.08px;-webkit-text-stroke:0.3px #444746;">Add sources</div>
<div class="t" style="left:776.9px;top:588.1px;font-size:8.6px;line-height:12px;color:#80868b;letter-spacing:-0.15px;">Gemini for Workspace can make mistakes, including about</div>
<div class="t" style="left:812px;top:601.4px;font-size:8.6px;line-height:12px;color:#80868b;letter-spacing:-0.08px;">people, so double-check it.</div>
<div class="t" style="left:915.5px;top:601.4px;font-size:8.6px;line-height:12px;color:#80868b;letter-spacing:-0.2px;text-decoration:underline;">Learn more</div>
</div>
</div>
</body>
</html>
